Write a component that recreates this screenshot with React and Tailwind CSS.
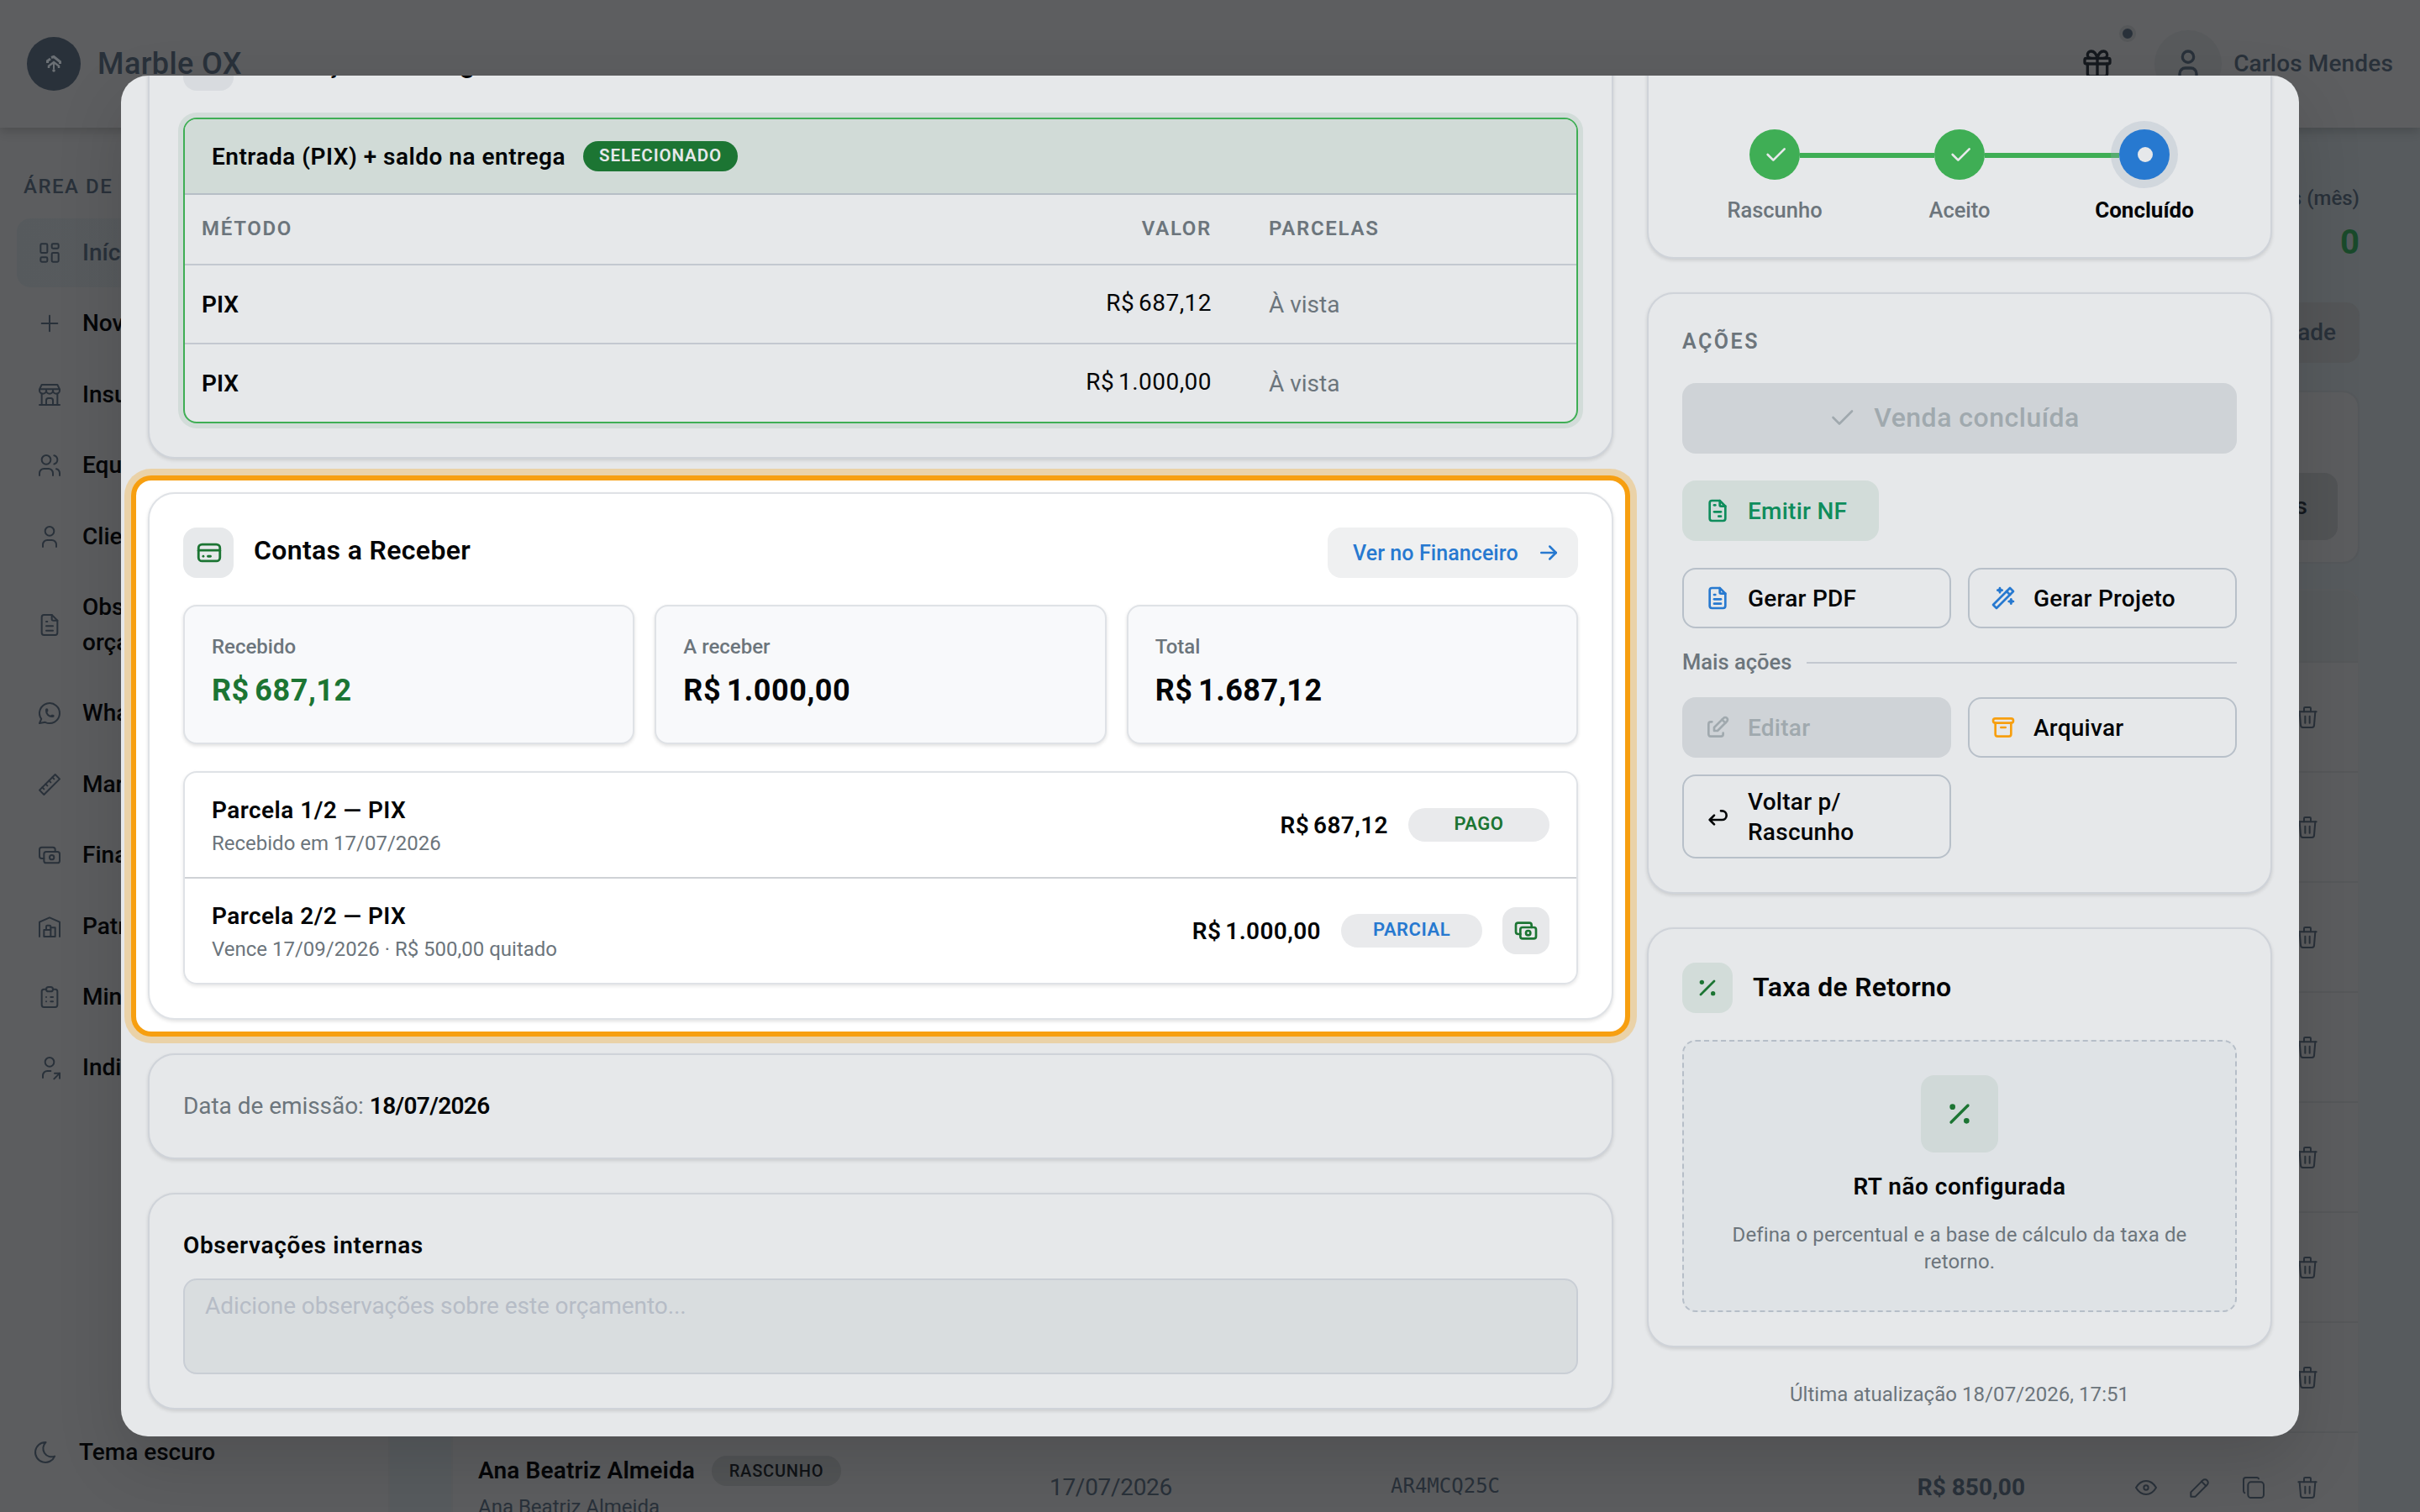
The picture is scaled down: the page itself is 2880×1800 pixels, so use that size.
import {
  TbArchive, TbArrowBack, TbArrowRight, TbBrandWhatsapp, TbBuildingStore, TbBuildingWarehouse, TbCash, TbCheck,
  TbClipboardList, TbCopy, TbCreditCard, TbEdit, TbEye, TbFileInvoice, TbFileText, TbGift, TbLayoutDashboard,
  TbMoon, TbPencil, TbPercentage, TbPlus, TbRuler2, TbTrash, TbUser, TbUserShare, TbUsers, TbWand,
} from "react-icons/tb";

const NAV = [
  [TbLayoutDashboard, "Início", true],
  [TbPlus, "Novo"],
  [TbBuildingStore, "Insumos"],
  [TbUsers, "Equipe"],
  [TbUser, "Clientes"],
  [TbFileText, "Obs. do orçamento"],
  [TbBrandWhatsapp, "WhatsApp"],
  [TbRuler2, "Marmoraria"],
  [TbCash, "Financeiro"],
  [TbBuildingWarehouse, "Patrimônio"],
  [TbClipboardList, "Minutas"],
  [TbUserShare, "Indicações"],
];

const CARD = "rounded-[32px] border-2 border-[#cfd3d9] bg-[#e6e8ea] shadow-[0_2px_4px_rgba(0,0,0,0.12)]";

function Logo() {
  return (
    <div className="flex size-16 shrink-0 items-center justify-center rounded-full bg-[#29313a]">
      <svg width="18" height="22" viewBox="0 0 18 22" fill="none" stroke="#6b7075" strokeWidth="3">
        <path d="M1.500 10V7.500L5 5M6 3.500 9 2.500l7.500 6V11" />
        <path d="M3 16v-2.500L9 9l6 4.500V16" strokeWidth="2.500" />
        <path d="M9 9.500v8" strokeWidth="2" />
        <circle cx="9" cy="19" r="1.800" fill="#6b7075" stroke="none" />
      </svg>
    </div>
  );
}

function Header() {
  return (
    <header className="relative z-10 flex h-[152px] shrink-0 items-center justify-between bg-[#5d5e60] pr-8 pl-8 shadow-[0_4px_12px_rgba(0,0,0,0.18)] text-[#29313a]">
      <div className="flex items-center gap-5">
        <Logo />
        <span className="text-[36px] leading-none font-medium tracking-[0.400px]">Marble OX</span>
      </div>
      <div className="flex items-center">
        <div className="relative mr-12 text-[#15191e]">
          <TbGift size={40} />
          <span className="absolute -top-[26px] left-[46px] size-5 rounded-full border-4 border-[#555759] bg-[#29313a]" />
        </div>
        <div className="mr-[14px] flex size-20 items-center justify-center rounded-full bg-[#585a5c]">
          <TbUser size={40} />
        </div>
        <span className="text-[28px] leading-none font-medium tracking-[0.150px]">Carlos Mendes</span>
      </div>
    </header>
  );
}

function Sidebar() {
  return (
    <aside className="flex w-[464px] shrink-0 flex-col border-r-2 border-[#595b5d] bg-[#5c5d5f] px-5 pt-[50px] pb-[29px]">
      <p className="flex h-[58px] gap-[14px] pl-2 text-[24px] leading-[40px] font-medium tracking-[1.500px] text-[#29313a]">
        <span>ÁREA DE</span>
        <span>TRABALHO</span>
      </p>
      <nav className="flex flex-col gap-[2.400px]">
        {NAV.map(([Icon, label, active]) => (
          <div key={label} className={active ? "flex items-center gap-[23px] rounded-[16px] bg-linear-to-r from-[#565a5d] to-[#5c5d5f] px-[23px] py-5 text-[#29313a]" : "flex items-center gap-[23px] px-[23px] py-5 text-[#050608]"}>
            <Icon size={32} strokeWidth={1.5} className="shrink-0 text-[#29313a]" />
            <span className="w-[150px] text-[28px] leading-[42px] font-medium">{label}</span>
          </div>
        ))}
      </nav>
      <div className="mt-auto flex h-[84px] items-center gap-6 pl-[18px] text-[#050608]">
        <TbMoon size={32} strokeWidth={1.5} className="text-[#29313a]" />
        <span className="text-[28px] leading-none font-medium">Tema escuro</span>
      </div>
    </aside>
  );
}

function OrderRow({ last }) {
  return (
    <div className="flex h-[131px] shrink-0 items-center border-t-2 border-[#56585a] pr-[44px] pl-[30px] text-[#29313a]">
      <div className="w-[680px]">
        {last && (
          <>
            <div className="flex h-[42px] items-center gap-[20px]">
              <span className="text-[28px] leading-none font-semibold tracking-[0.150px] text-[#050608]">Ana Beatriz Almeida</span>
              <span className="flex h-9 w-[154px] items-center justify-center rounded-full bg-[#525456] text-[20px] leading-none font-medium tracking-[0.800px] text-[#101317]">RASCUNHO</span>
            </div>
            <p className="mt-1 text-[24px] leading-[36px]">Ana Beatriz Almeida</p>
          </>
        )}
      </div>
      {last && (
        <>
          <span className="w-[406px] text-[28px] tracking-[-0.300px]">17/07/2026</span>
          <span className="mb-1 font-['DejaVu_Sans_Mono',monospace] text-[24px]">AR4MCQ25C</span>
        </>
      )}
      <div className="ml-auto flex items-center gap-8">
        {last && (
          <>
            <span className="mr-[96px] text-[28px] font-bold">R$ 850,00</span>
            <TbEye size={32} strokeWidth={1.5} />
            <TbPencil size={32} strokeWidth={1.5} />
            <TbCopy size={32} strokeWidth={1.5} />
          </>
        )}
        <TbTrash size={32} strokeWidth={1.5} />
      </div>
    </div>
  );
}

function Dashboard() {
  return (
    <main className="flex min-w-0 flex-1 flex-col bg-[#575b5e] pt-[66px] pr-[72px] pl-[73px]">
      <div className="flex h-[142px] shrink-0 flex-col items-end gap-[13px] text-[#29313a]">
        <span className="text-[24px] leading-[36px] font-medium">Concluídos (mês)</span>
        <span className="text-[40px] leading-[44px] font-bold text-[#1a4a2b]">0</span>
      </div>
      <div className="flex h-[72px] w-[300px] shrink-0 items-center justify-end self-end rounded-[16px] bg-[#545658] pr-7 text-[28px] font-medium text-[#29313a]">Atividade</div>
      <div className="mt-[33px] flex h-[206px] shrink-0 items-end justify-end rounded-[20px] border-2 border-[#55585b] bg-[#5c5d5f] pr-[24px] pb-[26px]">
        <div className="flex h-20 w-[180px] items-center justify-end rounded-[16px] bg-[#525456] pr-[36px] text-[28px] font-medium text-[#15191e]">Filtros</div>
      </div>
      <div className="mt-[30px] flex h-[1200px] shrink-0 flex-col overflow-hidden rounded-t-[20px] border-2 border-[#595b5d] bg-[#5c5d5f]">
        <div className="h-[84px] shrink-0 bg-[#575a5c]" />
        {[0, 1, 2, 3, 4, 5, 6, 7].map((i) => <OrderRow key={i} last={i === 7} />)}
      </div>
    </main>
  );
}

function Payment() {
  return (
    <section className={CARD + " shrink-0 p-10"}>
      <div className="mb-8 flex h-[60px] items-center gap-6">
        <div className="flex size-[60px] items-center justify-center rounded-[16px] bg-[#d8dbdf]">
          <TbCash size={32} className="text-[#1c7533]" />
        </div>
        <h2 className="pb-[5px] text-[32px] leading-none font-semibold">Produção e entrega</h2>
      </div>
      <div className="overflow-hidden rounded-[16px] border-2 border-[#3fae55] shadow-[0_0_0_6px_#d2dcd9]">
        <div className="flex h-[90px] items-center gap-[21px] border-b-2 border-[#b6bec6] bg-[#d1dbd7] pl-8">
          <span className="pt-[1px] text-[28px] leading-none font-semibold tracking-[0.500px]">Entrada (PIX) + saldo na entrega</span>
          <span className="flex h-9 w-[184px] items-center justify-center rounded-full bg-[#1c7533] pb-[2px] text-[20.500px] leading-none font-semibold tracking-[0.900px] text-[#e6e8ea]">SELECIONADO</span>
        </div>
        <div className="grid h-[84px] grid-cols-[1fr_402px_434px] items-center border-b-2 border-[#c3c8d0] pb-[3px] pl-5 text-[24px] leading-none font-semibold tracking-[1.700px] text-[#6c757c]">
          <span>MÉTODO</span><span className="text-right">VALOR</span><span className="pl-[68px]">PARCELAS</span>
        </div>
        {["R$ 687,12", "R$ 1.000,00"].map((v, i) => (
          <div key={v} className={i === 0 ? "grid h-[94px] grid-cols-[1fr_402px_434px] items-center border-b-2 border-[#c3c8d0] pt-[2px] pl-5 text-[28px] leading-none" : "grid h-[92px] grid-cols-[1fr_402px_434px] items-center pt-[2px] pl-5 text-[28px] leading-none"}>
            <span className="font-semibold">PIX</span>
            <span className="pb-1 text-right tracking-[0.450px] [word-spacing:-2.500px]">{v}</span>
            <span className="pl-[68px] text-[#6c757c]">À vista</span>
          </div>
        ))}
      </div>
    </section>
  );
}

function Stat({ label, value, green }) {
  return (
    <div className="flex h-[166px] flex-col rounded-[16px] border-2 border-[#dfe2e6] bg-[#f8f9fb] px-8 pt-8 shadow-[0_2px_4px_rgba(0,0,0,0.12)]">
      <span className="text-[24px] leading-[32px] font-medium text-[#6c757c]">{label}</span>
      <span className={green ? "mt-[11px] text-[36px] leading-[50px] font-bold tracking-[0.550px] [word-spacing:-3px] text-[#1c7533]" : "mt-[11px] text-[36px] leading-[50px] font-bold tracking-[0.550px] [word-spacing:-3px]"}>{value}</span>
    </div>
  );
}

function Installment({ title, sub, value, badge, tone, action }) {
  return (
    <div className="flex h-[124px] items-center justify-between px-8">
      <div>
        <p className="pt-[1px] text-[28px] leading-[42px] font-semibold tracking-[0.450px]">{title}</p>
        <p className="text-[24px] leading-[36px] text-[#6c757c]">{sub}</p>
      </div>
      <div className="flex items-center gap-6">
        <span className="pt-[1px] text-[28px] leading-none font-semibold tracking-[0.400px] [word-spacing:-2.500px]">{value}</span>
        <span className={"flex h-10 w-[168px] items-center justify-center rounded-full bg-[#e9eaec] pb-[3px] text-[22px] leading-none font-semibold tracking-[0.500px] " + tone}>{badge}</span>
        {action && (
          <span className="flex size-14 items-center justify-center rounded-[16px] bg-[#e7e8ea]">
            <TbCash size={32} className="text-[#1c7533]" />
          </span>
        )}
      </div>
    </div>
  );
}

function Receivables() {
  return (
    <div className="relative -m-[14px] shrink-0 rounded-[18px] bg-white p-[14px] shadow-[0_0_0_6px_#f79f10,0_0_0_14px_#ead2a8]">
      <section className="rounded-[32px] border-2 border-[#dfe2e6] bg-white p-10 shadow-[0_2px_4px_rgba(0,0,0,0.12)]">
        <div className="flex h-[60px] items-center justify-between">
          <div className="flex items-center gap-6">
            <div className="flex size-[60px] items-center justify-center rounded-[16px] bg-[#e7e9eb] pl-[2px]">
              <TbCreditCard size={34} className="text-[#1c7533]" />
            </div>
            <h2 className="pb-[6px] text-[32px] leading-none font-semibold tracking-[0.350px]">Contas a Receber</h2>
          </div>
          <div className="flex h-[60px] w-[298px] items-center justify-between rounded-[16px] bg-[#eff0f1] pr-5 pl-[30px] text-[#2779d0]">
            <span className="text-[25px] leading-none font-medium tracking-[0.080px]">Ver no Financeiro</span>
            <TbArrowRight size={30} />
          </div>
        </div>
        <div className="mt-8 grid grid-cols-3 gap-6">
          <Stat label="Recebido" value="R$ 687,12" green />
          <Stat label="A receber" value="R$ 1.000,00" />
          <Stat label="Total" value="R$ 1.687,12" />
        </div>
        <div className="mt-8 rounded-[16px] border-2 border-[#dfe2e6] shadow-[0_2px_4px_rgba(0,0,0,0.1)]">
          <Installment title="Parcela 1/2 — PIX" sub="Recebido em 17/07/2026" value="R$ 687,12" badge="PAGO" tone="text-[#1c7533]" />
          <div className="h-[2px] bg-[#cfd2d6]" />
          <Installment title="Parcela 2/2 — PIX" sub="Vence 17/09/2026 · R$ 500,00 quitado" value="R$ 1.000,00" badge="PARCIAL" tone="text-[#2779d0]" action />
        </div>
      </section>
    </div>
  );
}

function Step({ label, current }) {
  return (
    <div className="flex w-[220px] flex-col items-center">
      {current ? (
        <div className="relative flex size-[60px] items-center justify-center rounded-full bg-[#2779d0] shadow-[0_0_0_10px_rgba(150,165,185,0.26)]">
          <span className="ml-[2px] size-[18px] rounded-full bg-[#e6e8ea]" />
        </div>
      ) : (
        <div className="relative flex size-[60px] items-center justify-center rounded-full bg-[#3fae55] pl-[2px] text-[#e6e8ea]">
          <TbCheck size={32} />
          <span className="absolute top-[28px] left-[60px] h-[6px] w-[160px] bg-[#3fae55]" />
        </div>
      )}
      <span className={current ? "mt-5 text-[26px] leading-[32px] font-bold" : "mt-5 text-[25.500px] leading-[32px] font-medium text-[#6c757c]"}>{label}</span>
    </div>
  );
}

function Action({ icon: Icon, tone, children }) {
  return (
    <div className="flex min-h-[72px] items-center gap-5 rounded-[16px] border-2 border-[#b8c0c9] py-3 pr-6 pl-[24px] text-[28px] leading-[36px] font-medium tracking-[0.250px]">
      <Icon size={32} className={"shrink-0 " + tone} />
      <span className="relative top-px w-[190px]">{children}</span>
    </div>
  );
}

function Actions() {
  return (
    <section className={CARD + " h-[716px] shrink-0 px-10 pt-10"}>
      <p className="text-[25px] leading-[34px] font-semibold tracking-[2.500px] text-[#6c757c]">AÇÕES</p>
      <div className="mt-8 flex h-[84px] items-center justify-center gap-5 rounded-[16px] bg-[#cfd3d7] pr-[15px] pb-0.5 text-[32px] leading-none font-medium tracking-[0.500px] text-[#a0a9ae]">
        <TbCheck size={36} strokeWidth={1.75} />
        Venda concluída
      </div>
      <div className="mt-8 flex h-[72px] w-[234px] items-center gap-5 rounded-[16px] bg-[#d2dcd9] pl-[26px] text-[28px] leading-none font-medium tracking-[0.250px] text-[#0f8d5c]">
        <TbFileInvoice size={32} />
        <span className="pt-px">Emitir NF</span>
      </div>
      <div className="mt-8 grid grid-cols-2 gap-5">
        <Action icon={TbFileText} tone="text-[#2779d0]">Gerar PDF</Action>
        <Action icon={TbWand} tone="text-[#2779d0]">Gerar Projeto</Action>
      </div>
      <div className="my-[22px] flex h-[38px] items-center gap-[18px] pb-[1px] text-[25.500px] leading-none font-medium text-[#6c757c]">
        Mais ações
        <span className="mt-px h-[2px] flex-1 bg-[#c3c8d0]" />
      </div>
      <div className="grid grid-cols-2 gap-5">
        <div className="flex h-[72px] items-center gap-5 rounded-[16px] bg-[#cfd3d7] pl-[26px] text-[28px] leading-none font-medium tracking-[0.250px] text-[#a0a9ae]">
          <TbEdit size={32} />
          <span className="pt-px">Editar</span>
        </div>
        <Action icon={TbArchive} tone="text-[#f79f10]">Arquivar</Action>
        <Action icon={TbArrowBack} tone="text-[#030507]">Voltar p/ Rascunho</Action>
      </div>
    </section>
  );
}

function ReturnRate() {
  return (
    <section className={CARD + " h-[500px] shrink-0 p-10"}>
      <div className="flex items-center gap-6">
        <div className="flex size-[60px] items-center justify-center rounded-[16px] bg-[#d2dcd9]">
          <TbPercentage size={32} className="text-[#1c7533]" />
        </div>
        <h2 className="pb-[3px] text-[32px] leading-none font-semibold tracking-[0.250px]">Taxa de Retorno</h2>
      </div>
      <div className="mt-8 flex h-[324px] flex-col items-center rounded-[16px] border-2 border-dashed border-[#b6bec8] bg-[#dfe3e6] px-10 pt-10 text-center">
        <div className="flex size-[92px] items-center justify-center rounded-[16px] bg-[#d0d9d8]">
          <TbPercentage size={40} className="text-[#1c7533]" />
        </div>
        <p className="mt-5 text-[28px] leading-[42px] font-semibold tracking-[0.500px]">RT não configurada</p>
        <p className="mt-5 text-[24px] leading-[32px] tracking-[0.140px] text-[#6c757c]">Defina o percentual e a base de cálculo da taxa de retorno.</p>
      </div>
    </section>
  );
}

function Modal() {
  return (
    <div className="absolute inset-0 z-20 flex items-center justify-center">
      <div className="flex h-[1620px] w-[2592px] gap-10 overflow-hidden rounded-[32px] bg-[#e6e8ea] px-8 pb-8 text-[#030507] shadow-[0_30px_80px_rgba(0,0,0,0.14)]">
        <div className="flex w-[1744px] flex-col justify-end gap-10">
          <Payment />
          <Receivables />
          <section className={CARD + " shrink-0 p-10 text-[28px] leading-[42px]"}>
            <span className="tracking-[-0.050px] text-[#6c757c]">Data de emissão:</span> <span className="font-semibold tracking-[-0.650px]">18/07/2026</span>
          </section>
          <section className={CARD + " shrink-0 p-10"}>
            <h3 className="text-[28px] leading-[42px] font-semibold tracking-[0.640px]">Observações internas</h3>
            <div className="mt-[18px] h-[114px] rounded-[16px] border-2 border-[#c9ced5] bg-[#d9dddf] px-6 pt-[10px] text-[28px] leading-[42px] tracking-[-0.080px] text-[#b6bcc6]">
              Adicione observações sobre este orçamento...
            </div>
          </section>
        </div>
        <div className="flex w-[744px] flex-col justify-end">
          <section className={CARD + " mb-10 flex h-[360px] shrink-0 items-end justify-center pb-10"}>
            <Step label="Rascunho" />
            <Step label="Aceito" />
            <Step label="Concluído" current />
          </section>
          <Actions />
          <div className="h-10 shrink-0" />
          <ReturnRate />
          <p className="mt-[38px] text-center text-[24px] leading-[36px] tracking-[0.050px] text-[#6c757c]">Última atualização 18/07/2026, 17:51</p>
        </div>
      </div>
    </div>
  );
}

export default function App() {
  return (
    <div className="relative flex h-[1800px] w-[2880px] flex-col overflow-hidden bg-[#575b5e] font-['Roboto',sans-serif]">
      <Header />
      <div className="flex h-[1648px]">
        <Sidebar />
        <Dashboard />
      </div>
      <Modal />
    </div>
  );
}
